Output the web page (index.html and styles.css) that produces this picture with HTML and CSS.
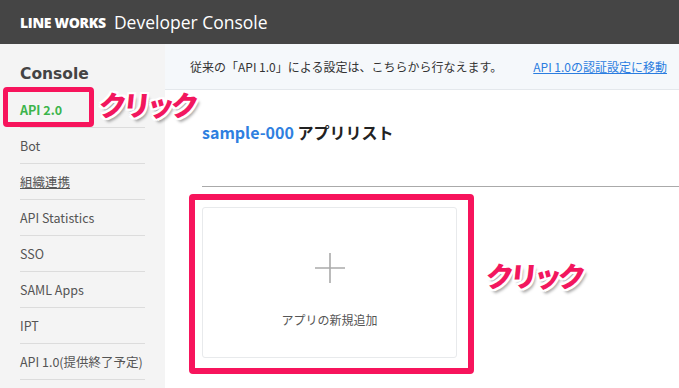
FILE: index.html
```html
<!DOCTYPE html>
<html>
<head>
    <title>LINE WORKS Developer Console</title>
    <link rel="stylesheet" href="styles.css">
</head>
<body>
    <header class="topbar">
        <span class="brand">LINE WORKS</span>
        <span class="product">Developer Console</span>
    </header>

    <div class="layout">
        <aside class="sidebar">
            <h2 class="side-title">Console</h2>
            <ul class="side-menu">
                <li class="active">API 2.0</li>
                <li>Bot</li>
                <li class="underline">組織連携</li>
                <li>API Statistics</li>
                <li>SSO</li>
                <li>SAML Apps</li>
                <li>IPT</li>
                <li>API 1.0(提供終了予定)</li>
            </ul>
        </aside>

        <main class="content">
            <div class="notice">
                <span>従来の「API 1.0」による設定は、こちらから行なえます。</span>
                <a href="#" class="notice-link">API 1.0の認証設定に移動</a>
            </div>

            <h1 class="page-title"><span class="domain">sample-000</span> アプリリスト</h1>

            <div class="app-list">
                <div class="add-card">
                    <svg class="plus" width="30" height="30" viewBox="0 0 30 30">
                        <path d="M15 0V30M0 15H30" stroke="#aaa" stroke-width="1.6" fill="none"/>
                    </svg>
                    <p>アプリの新規追加</p>
                </div>
            </div>
        </main>
    </div>

    <!-- 注釈 -->
    <div class="mark mark-menu"></div>
    <div class="callout callout-menu">クリック</div>
    <div class="mark mark-card"></div>
    <div class="callout callout-card">クリック</div>
</body>
</html>
```

FILE: styles.css
```css
body {
    margin: 0;
    height: 388px;
    overflow: hidden;
    font-family: "Noto Sans CJK JP", "Noto Sans", sans-serif;
    color: #333;
}

.topbar {
    height: 44px;
    background: #454545;
    display: flex;
    align-items: center;
    padding-left: 20px;
    color: #fff;
}

.brand {
    font-family: "Open Sans", sans-serif;
    font-weight: 800;
    font-size: 14px;
    letter-spacing: -0.3px;
    margin-right: 8px;
}

.product {
    font-family: "Open Sans", sans-serif;
    font-size: 17.5px;
}

.layout {
    display: flex;
    height: 344px;
}

.sidebar {
    width: 165px;
    background: #f4f4f4;
    padding-left: 20px;
    box-sizing: border-box;
}

.side-title {
    margin: 20px 0 8px;
    font-family: "DejaVu Sans", sans-serif;
    font-size: 15.5px;
    line-height: 20px;
    font-weight: bold;
    color: #444;
}

.side-menu {
    list-style: none;
    margin: 0;
    padding: 0;
    width: 125px;
}

.side-menu li {
    height: 36px;
    line-height: 35px;
    border-bottom: 1px solid #dcdcdc;
    box-sizing: border-box;
    font-size: 12.5px;
    color: #555;
}

.side-menu li.active {
    color: #3cb44b;
    font-weight: bold;
}

.side-menu li.underline {
    text-decoration: underline;
}

.content {
    flex: 1;
    background: #fff;
}

.notice {
    height: 46px;
    background: #f5f8fb;
    border-bottom: 1px solid #e4e8ec;
    box-sizing: border-box;
    display: flex;
    align-items: center;
    padding: 0 12px 0 25px;
    font-size: 12px;
    color: #333;
}

.notice-link {
    margin-left: auto;
    color: #2b7de0;
}

.page-title {
    margin: 31px 0 0 37px;
    font-size: 16px;
    line-height: 22px;
    font-weight: bold;
    color: #222;
}

.domain {
    color: #2e80e0;
}

.app-list {
    margin: 43px 0 0 37px;
    border-top: 1px solid #aaa;
    padding-top: 20px;
}

.add-card {
    width: 255px;
    height: 151px;
    box-sizing: border-box;
    border: 1px solid #e8eaec;
    border-radius: 3px;
    display: flex;
    flex-direction: column;
    align-items: center;
    padding-top: 45px;
}

.add-card p {
    margin: 28px 0 0;
    font-size: 12px;
    color: #555;
}

.mark {
    position: absolute;
    border: 5px solid #f7145c;
    border-radius: 4px;
    box-sizing: border-box;
}

.mark-menu {
    left: 3px;
    top: 87px;
    width: 91px;
    height: 40px;
}

.mark-card {
    left: 189px;
    top: 194px;
    width: 285px;
    height: 180px;
    border-width: 6px;
}

.callout {
    position: absolute;
    font-size: 28px;
    font-weight: 900;
    letter-spacing: -4px;
    color: #f2175e;
    transform: skewX(-6deg);
    text-shadow:
        2px 0 #fff, -2px 0 #fff, 0 2px #fff, 0 -2px #fff,
        2px 2px #fff, -2px -2px #fff, 2px -2px #fff, -2px 2px #fff,
        3px 4px 3px rgba(0, 0, 0, 0.35);
}

.callout-menu {
    left: 99px;
    top: 84px;
}

.callout-card {
    left: 486px;
    top: 255px;
}
```
